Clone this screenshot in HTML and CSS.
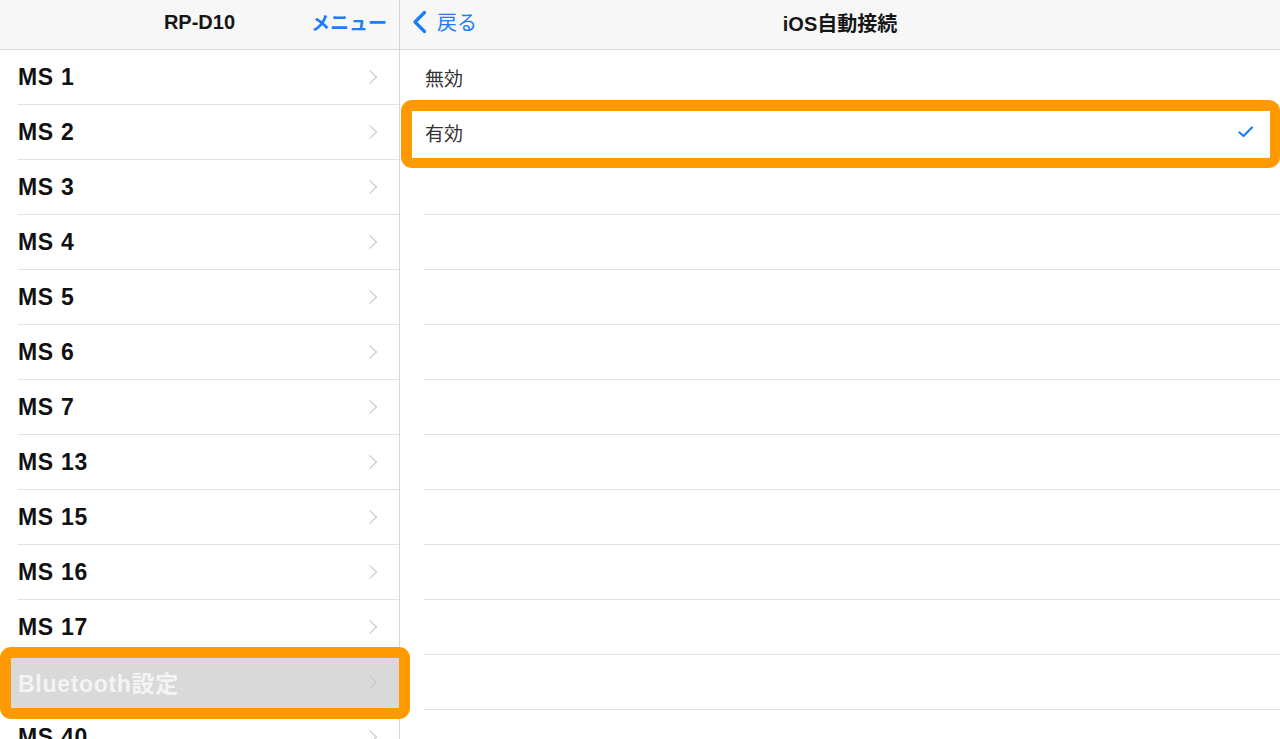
FILE: index.html
```html
<!DOCTYPE html>
<html lang="ja">
<head>
<meta charset="utf-8">
<link rel="stylesheet" href="styles.css">
</head>
<body>
<div class="app">
  <div class="pane left">
    <div class="nav">
      <span class="title">RP-D10</span>
      <span class="menu">メニュー</span>
    </div>
    <ul class="list">
      <li class="row"><span class="label">MS 1</span><span class="chev"></span></li>
      <li class="row"><span class="label">MS 2</span><span class="chev"></span></li>
      <li class="row"><span class="label">MS 3</span><span class="chev"></span></li>
      <li class="row"><span class="label">MS 4</span><span class="chev"></span></li>
      <li class="row"><span class="label">MS 5</span><span class="chev"></span></li>
      <li class="row"><span class="label">MS 6</span><span class="chev"></span></li>
      <li class="row"><span class="label">MS 7</span><span class="chev"></span></li>
      <li class="row"><span class="label">MS 13</span><span class="chev"></span></li>
      <li class="row"><span class="label">MS 15</span><span class="chev"></span></li>
      <li class="row"><span class="label">MS 16</span><span class="chev"></span></li>
      <li class="row"><span class="label">MS 17</span><span class="chev"></span></li>
      <li class="row selected"><span class="label">Bluetooth設定</span><span class="chev"></span></li>
      <li class="row"><span class="label">MS 40</span><span class="chev"></span></li>
    </ul>
    <div class="mark mark-left"></div>
  </div>
  <div class="pane right">
    <div class="nav">
      <span class="back">
        <svg class="back-icon" width="16" height="24" viewBox="0 0 16 24"><path d="M12.5 2.5 L3 12 L12.5 21.5" fill="none" stroke="#1a7ef7" stroke-width="3.2" stroke-linecap="round" stroke-linejoin="round"/></svg>
        <span>戻る</span>
      </span>
      <span class="title">iOS自動接続</span>
    </div>
    <ul class="list opts">
      <li class="row"><span class="opt">無効</span></li>
      <li class="row"><span class="opt">有効</span>
        <svg class="check" width="16" height="12" viewBox="0 0 16 12"><path d="M1.5 6.5 L5.5 10 L14 1.5" fill="none" stroke="#1a7ef7" stroke-width="2.2" stroke-linecap="round" stroke-linejoin="round"/></svg>
      </li>
      <li class="row"></li>
      <li class="row"></li>
      <li class="row"></li>
      <li class="row"></li>
      <li class="row"></li>
      <li class="row"></li>
      <li class="row"></li>
      <li class="row"></li>
      <li class="row"></li>
      <li class="row"></li>
      <li class="row"></li>
    </ul>
    <div class="mark mark-right"></div>
  </div>
</div>
</body>
</html>
```
FILE: styles.css
```css
html, body {
  margin: 0;
  padding: 0;
  background: #ffffff;
  overflow: hidden;
}
body {
  width: 1280px;
  height: 739px;
  font-family: "Liberation Sans", "Noto Sans CJK JP", sans-serif;
}
.app {
  position: relative;
  display: flex;
  height: 739px;
  overflow: hidden;
}
.pane {
  position: relative;
  display: flex;
  flex-direction: column;
}
.left {
  width: 399px;
  border-right: 1px solid #d6d6d6;
  overflow: visible;
}
.right {
  flex: 1;
  overflow: hidden;
}
.nav {
  height: 45px;
  padding-bottom: 4px;
  flex: none;
  background: #f7f7f7;
  border-bottom: 1px solid #d8d8d8;
  display: flex;
  align-items: center;
  justify-content: center;
  position: relative;
}
.title {
  font-size: 20px;
  font-weight: 700;
  color: #161616;
  font-family: "Liberation Sans", "Noto Sans CJK JP", sans-serif;
}
.menu {
  position: absolute;
  right: 12px;
  top: 8px;
  font-size: 19px;
  font-weight: 700;
  color: #1a7ef7;
  font-family: "Noto Sans CJK JP", sans-serif;
}
.back {
  position: absolute;
  left: 12px;
  top: 7px;
  display: flex;
  align-items: center;
  gap: 9px;
  color: #1a7ef7;
  font-size: 20px;
  font-family: "Noto Sans CJK JP", sans-serif;
}
.back-icon {
  display: block;
}
.list {
  list-style: none;
  margin: 0;
  padding: 0;
}
.row {
  height: 54px;
  border-bottom: 1px solid #e3e3e3;
  display: flex;
  align-items: center;
  margin-left: 18px;
  padding-right: 20px;
}
.left .row {
  justify-content: space-between;
}
.label {
  font-size: 23px;
  font-weight: 700;
  letter-spacing: 0.7px;
  color: #111;
  font-family: "Liberation Sans", "Noto Sans CJK JP", sans-serif;
}
.chev {
  width: 9px;
  height: 9px;
  border-right: 1.5px solid #c4c4c9;
  border-top: 1.5px solid #c4c4c9;
  transform: rotate(45deg);
  margin-right: 4px;
}
.row.selected {
  margin-left: 0;
  padding-left: 18px;
  background: #d9d9d9;
}
.row.selected .label {
  color: #f4f4f4;
}
.row.selected .chev {
  border-color: #c8c8c8;
}
.opts .row {
  margin-left: 24px;
  justify-content: space-between;
  padding-right: 26px;
}
.opt {
  font-size: 19px;
  color: #333;
  font-family: "Noto Sans CJK JP", sans-serif;
  margin-left: 1px;
}
.check {
  display: block;
}
.mark {
  position: absolute;
  border: 11px solid #ff9900;
  border-radius: 11px;
  box-sizing: border-box;
  z-index: 5;
}
.mark-left {
  left: 0;
  top: 647px;
  width: 410px;
  height: 72px;
}
.mark-right {
  left: 1px;
  top: 100px;
  right: 0;
  height: 68px;
  border-width: 11px 10px 10px 11px;
}
```
